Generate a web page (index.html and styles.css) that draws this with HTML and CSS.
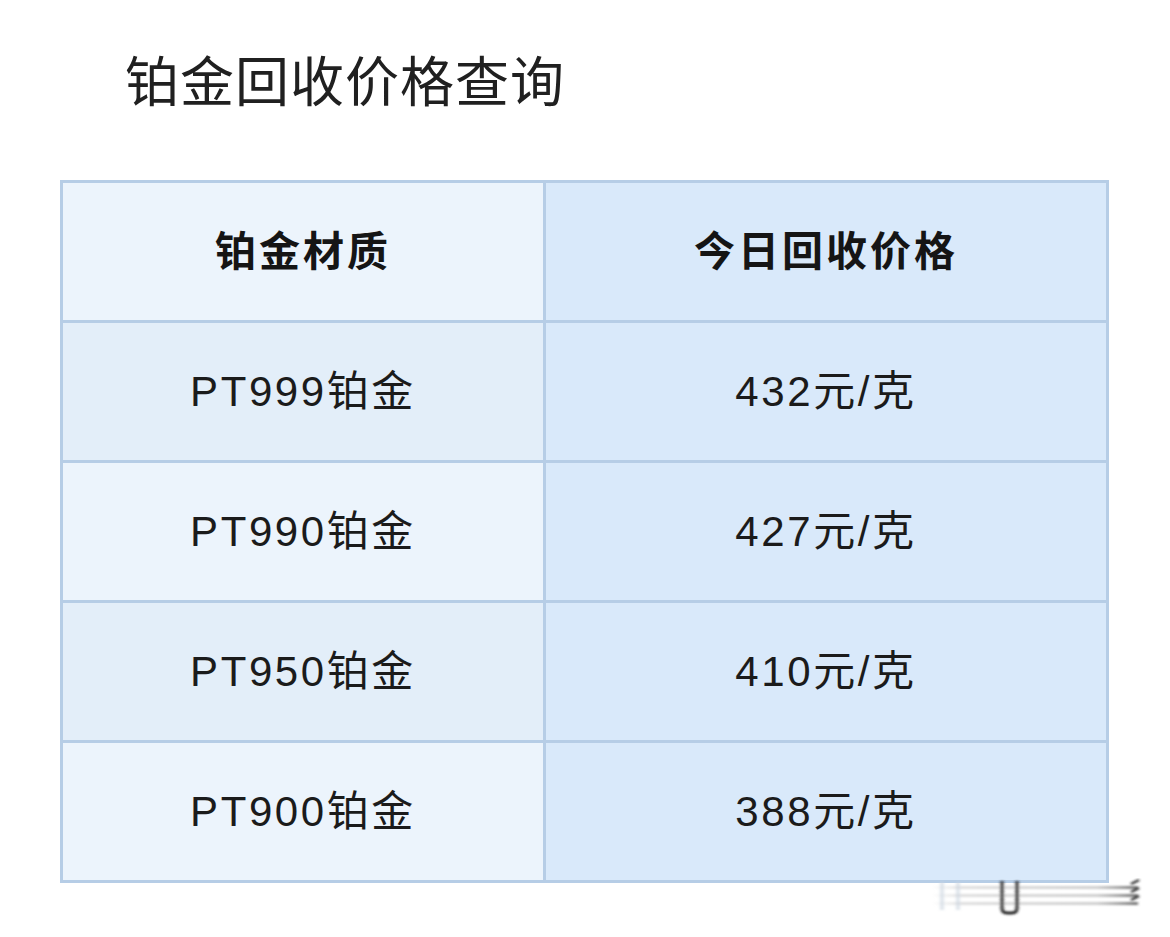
FILE: index.html
```html
<!DOCTYPE html>
<html lang="zh-CN">
<head>
<meta charset="utf-8">
<title>铂金回收价格查询</title>
<link rel="stylesheet" href="styles.css">
</head>
<body>
<div class="page">
  <h1 class="title">铂金回收价格查询</h1>
  <table class="price-table">
    <thead>
      <tr>
        <th class="col-a light">铂金材质</th>
        <th class="col-b">今日回收价格</th>
      </tr>
    </thead>
    <tbody>
      <tr>
        <td class="col-a dark">PT999铂金</td>
        <td class="col-b">432元/克</td>
      </tr>
      <tr>
        <td class="col-a light">PT990铂金</td>
        <td class="col-b">427元/克</td>
      </tr>
      <tr>
        <td class="col-a dark">PT950铂金</td>
        <td class="col-b">410元/克</td>
      </tr>
      <tr>
        <td class="col-a light">PT900铂金</td>
        <td class="col-b">388元/克</td>
      </tr>
    </tbody>
  </table>
  <svg class="watermark" width="230" height="44" viewBox="0 0 230 44" aria-hidden="true">
    <defs>
      <filter id="blur" x="-10%" y="-50%" width="120%" height="200%">
        <feGaussianBlur stdDeviation="1.6 1"/>
      </filter>
      <linearGradient id="fade" x1="0" x2="1" y1="0" y2="0">
        <stop offset="0" stop-color="#c8c8c8" stop-opacity="0"/>
        <stop offset="0.15" stop-color="#b8b8b8" stop-opacity="0.45"/>
        <stop offset="0.8" stop-color="#a8a8a8" stop-opacity="0.55"/>
        <stop offset="1" stop-color="#606060" stop-opacity="0.9"/>
      </linearGradient>
    </defs>
    <g filter="url(#blur)">
      <rect x="4" y="8" width="206" height="3" fill="url(#fade)"/>
      <rect x="4" y="16" width="206" height="3" fill="url(#fade)"/>
      <rect x="4" y="24" width="206" height="3" fill="url(#fade)"/>
      <rect x="12" y="4" width="4" height="28" fill="#c9d4e0" opacity="0.6"/>
      <rect x="28" y="4" width="4" height="28" fill="#c9d4e0" opacity="0.6"/>
      <path d="M74 3 V30 Q74 35 79 35 H84 Q89 35 89 30 V3" fill="none" stroke="#222" stroke-width="3"/>
      <path d="M203 6 L211 2 M203 14 L211 10 M203 22 L211 18" stroke="#222" stroke-width="2"/>
    </g>
  </svg>
</div>
</body>
</html>
```

FILE: styles.css
```css
html, body {
  margin: 0;
  padding: 0;
  background: #ffffff;
}

.page {
  position: relative;
  width: 1170px;
  height: 937px;
  padding-top: 52px;
  box-sizing: border-box;
  font-family: "Liberation Sans", "Noto Sans CJK SC", sans-serif;
  color: #1b1b1b;
}

.title {
  margin: 0 0 74px 125px;
  font-family: "Noto Sans CJK SC", sans-serif;
  font-size: 54px;
  line-height: 54px;
  font-weight: 400;
  letter-spacing: 1px;
  color: #202020;
}

.price-table {
  margin-left: 60px;
  border-collapse: separate;
  border-spacing: 3px;
  background: #b6cde6;
  table-layout: fixed;
}

.price-table th,
.price-table td {
  height: 137px;
  padding: 0 0 8px 0;
  text-align: center;
  vertical-align: middle;
  box-sizing: border-box;
}

.price-table th {
  font-family: "Noto Sans CJK SC", sans-serif;
  font-size: 41px;
  font-weight: 700;
  letter-spacing: 3px;
  color: #151515;
}

.price-table td {
  font-size: 42px;
  font-weight: 400;
  letter-spacing: 2.6px;
  color: #1b1b1b;
}

.col-a {
  width: 480px;
}

.col-b {
  width: 560px;
  background: #d9e9fa;
}

.light {
  background: #ecf4fc;
}

.dark {
  background: #e3eef9;
}

.watermark {
  position: absolute;
  left: 928px;
  top: 878px;
}
```
